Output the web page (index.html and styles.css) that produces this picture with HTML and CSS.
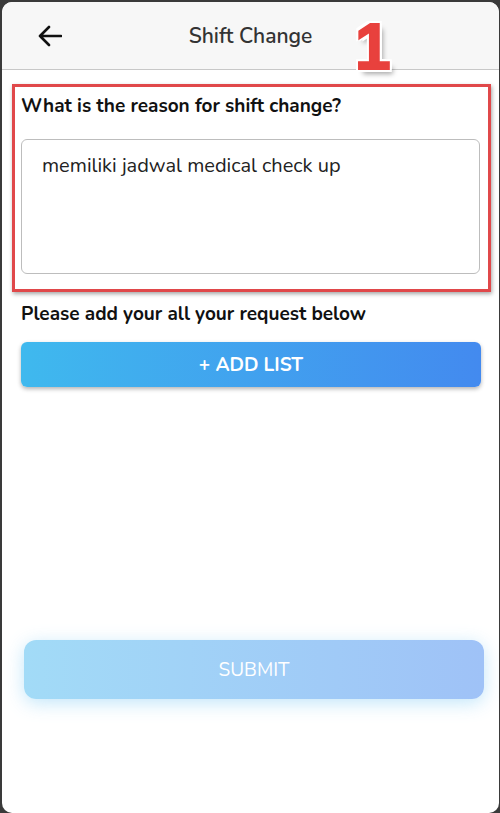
FILE: index.html
```html
<!DOCTYPE html>
<html lang="en">
<head>
    <meta charset="UTF-8">
    <meta name="viewport" content="width=device-width, initial-scale=1.0">
    <title>Shift Change</title>
    <link rel="stylesheet" href="styles.css">
</head>
<body>
    <div class="phone">
        <header class="topbar">
            <a href="#" class="back">
                <svg width="24" height="22" viewBox="0 0 24 22">
                    <path d="M23 11H2M11 2L2 11l9 9" fill="none" stroke="#111" stroke-width="2.6" stroke-linecap="round" stroke-linejoin="round"/>
                </svg>
            </a>
            <h1>Shift Change</h1>
            <span class="step">1</span>
        </header>

        <main class="content">
            <div class="highlight">
                <label for="reason" class="question">What is the reason for shift change?</label>
                <div class="reason-box" id="reason">memiliki jadwal medical check up</div>
            </div>

            <p class="question">Please add your all your request below</p>
            <button class="add-btn">+ ADD LIST</button>

            <div class="spacer"></div>

            <button class="submit-btn">SUBMIT</button>
        </main>
    </div>
</body>
</html>
```

FILE: styles.css
```css
body {
    font-family: 'Nunito', 'Lato', sans-serif;
    margin: 0;
    padding: 0;
    background: #3a3a3a;
}
.phone {
    margin: 2px 1px 0 2px;
    height: 811px;
    background: #fff;
    border-radius: 10px;
    overflow: hidden;
    display: flex;
    flex-direction: column;
}
.topbar {
    position: relative;
    height: 67px;
    background: #f7f7f7;
    border-bottom: 1px solid #c8c8c8;
    display: flex;
    align-items: center;
    justify-content: center;
}
.back {
    position: absolute;
    left: 36px;
    top: 23px;
}
.topbar h1 {
    margin: 0;
    font-size: 21px;
    font-weight: 600;
    color: #333;
}
.step {
    position: absolute;
    left: 353px;
    top: 13px;
    font-family: 'Liberation Sans', sans-serif;
    font-weight: bold;
    font-size: 64px;
    line-height: 1;
    color: #e8413d;
    -webkit-text-stroke: 2px #e8413d;
    text-shadow: 3px 3px 0 #fff, -3px -3px 0 #fff, 3px -3px 0 #fff, -3px 3px 0 #fff, 0 3px 0 #fff, 3px 0 0 #fff, 4px 5px 5px rgba(0, 0, 0, 0.35);
}
.content {
    flex: 1;
    display: flex;
    flex-direction: column;
    padding: 14px 18px 0 19px;
}
.highlight {
    border: 3px solid #e0484a;
    box-shadow: 1px 2px 4px rgba(0, 0, 0, 0.35);
    margin: 0 -10px 0 -9px;
    padding: 6px 8px 15px 6px;
}
.question {
    display: block;
    margin: 0;
    font-size: 19px;
    font-weight: 700;
    color: #111;
}
.reason-box {
    margin-top: 20px;
    height: 105px;
    border: 1px solid #bdbdbd;
    border-radius: 6px;
    padding: 12px 20px 16px;
    font-size: 20px;
    color: #222;
}
p.question {
    margin-top: 9px;
}
.add-btn {
    margin-top: 15px;
    height: 45px;
    border: none;
    border-radius: 6px;
    background: linear-gradient(to right, #3fb9ee, #438aef);
    color: #fff;
    font-family: inherit;
    font-size: 19px;
    font-weight: 700;
    box-shadow: 0 2px 4px rgba(0, 0, 0, 0.3);
}
.spacer {
    flex: 1;
}
.submit-btn {
    margin: 0 -3px 114px 3px;
    height: 59px;
    border: none;
    border-radius: 12px;
    background: linear-gradient(to right, #a2dbf7, #9fc2f7);
    color: #fff;
    font-family: inherit;
    font-size: 19px;
    box-shadow: 0 4px 18px rgba(120, 200, 245, 0.45);
}
```
